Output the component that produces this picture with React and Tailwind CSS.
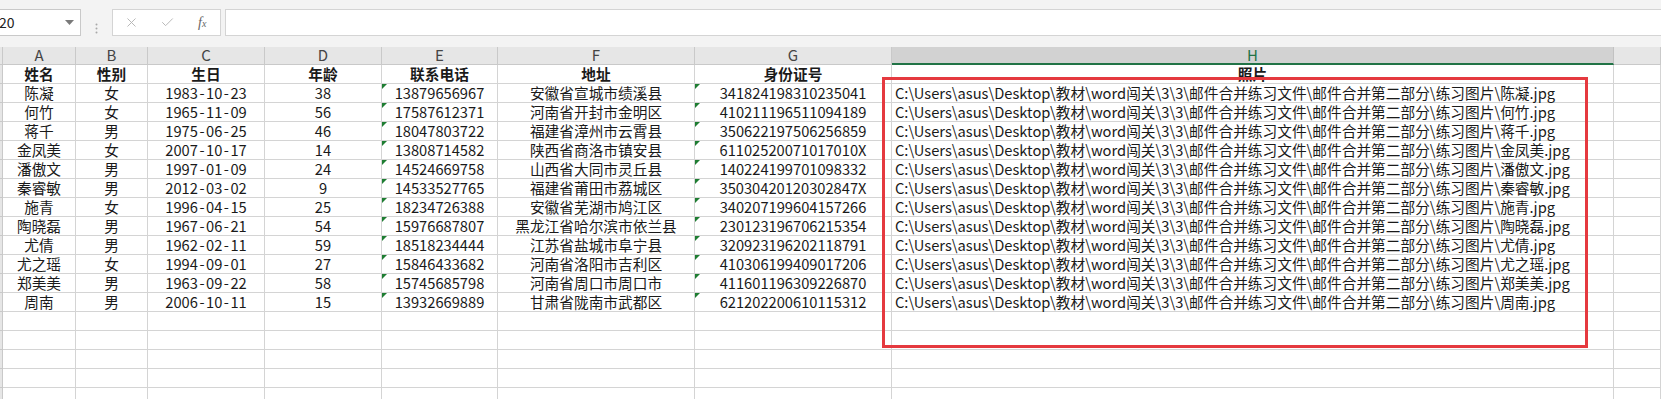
import React from 'react';
import { X, Check } from 'lucide-react';

const rows = [
  ['陈凝', '女', '1983-10-23', '38', '13879656967', '安徽省宣城市绩溪县', '341824198310235041'],
  ['何竹', '女', '1965-11-09', '56', '17587612371', '河南省开封市金明区', '410211196511094189'],
  ['蒋千', '男', '1975-06-25', '46', '18047803722', '福建省漳州市云霄县', '350622197506256859'],
  ['金凤美', '女', '2007-10-17', '14', '13808714582', '陕西省商洛市镇安县', '61102520071017010X'],
  ['潘傲文', '男', '1997-01-09', '24', '14524669758', '山西省大同市灵丘县', '140224199701098332'],
  ['秦睿敏', '男', '2012-03-02', '9', '14533527765', '福建省莆田市荔城区', '35030420120302847X'],
  ['施青', '女', '1996-04-15', '25', '18234726388', '安徽省芜湖市鸠江区', '340207199604157266'],
  ['陶晓磊', '男', '1967-06-21', '54', '15976687807', '黑龙江省哈尔滨市依兰县', '230123196706215354'],
  ['尤倩', '男', '1962-02-11', '59', '18518234444', '江苏省盐城市阜宁县', '320923196202118791'],
  ['尤之瑶', '女', '1994-09-01', '27', '15846433682', '河南省洛阳市吉利区', '410306199409017206'],
  ['郑美美', '男', '1963-09-22', '58', '15745685798', '河南省周口市周口市', '411601196309226870'],
  ['周南', '男', '2006-10-11', '15', '13932669889', '甘肃省陇南市武都区', '621202200610115312'],
];

const pathPrefix = 'C:\\Users\\asus\\Desktop\\教材\\word闯关\\3\\3\\邮件合并练习文件\\邮件合并第二部分\\练习图片\\';

const grid = 'grid grid-cols-[3px_73px_72px_117px_117px_116px_197px_197px_722px_47px]';
const cell = 'relative h-[19px] border-r border-b border-[#d4d4d4] flex items-center justify-center whitespace-nowrap overflow-visible';

// little green "number stored as text" marker
function Flag() {
  return <span className="absolute left-0 top-0 w-0 h-0 border-t-[5px] border-t-[#1e7d32] border-r-[5px] border-r-transparent" />;
}

// dates: hyphens are a bit wider in the sheet font
function DateText({ value }) {
  const parts = value.split('-');
  return (
    <span>
      {parts.map((p, i) => (
        <React.Fragment key={i}>
          {i > 0 && <span className="px-[1.5px]">-</span>}
          {p}
        </React.Fragment>
      ))}
    </span>
  );
}

function Toolbar() {
  return (
    <div className="h-[47px] bg-[#f3f3f3] pt-[9px] flex">
      <div className="w-[81px] h-[27px] bg-white border border-l-0 border-[#c9c9c9] flex items-center justify-between pr-[6px]">
        <span className="text-[14px] text-[#222] -ml-[1px]">20</span>
        <svg width="9" height="6" viewBox="0 0 9 6"><path d="M0 0h9L4.5 5z" fill="#7a7a7a" /></svg>
      </div>
      <div className="w-[31px] flex items-center justify-center">
        <svg width="3" height="11" viewBox="0 0 3 11">
          <circle cx="1.5" cy="1.5" r="1" fill="#a8a8a8" />
          <circle cx="1.5" cy="5.5" r="1" fill="#a8a8a8" />
          <circle cx="1.5" cy="9.5" r="1" fill="#a8a8a8" />
        </svg>
      </div>
      <div className="w-[109px] h-[27px] bg-white border border-[#d4d4d4] flex items-center">
        <div className="w-[38px] flex justify-center"><X size={15} strokeWidth={1.5} color="#b4b4b4" /></div>
        <div className="w-[34px] flex justify-center"><Check size={15} strokeWidth={1.5} color="#b4b4b4" /></div>
        <div className="w-[36px] flex justify-center text-[#666] italic font-['Liberation_Serif',serif] text-[14px]">
          f<span className="text-[10px] mt-[4px]">x</span>
        </div>
      </div>
      <div className="ml-[4px] flex-1 h-[27px] bg-white border border-r-0 border-[#d4d4d4]" />
    </div>
  );
}

function ColumnHeader() {
  const letters = ['', 'A', 'B', 'C', 'D', 'E', 'F', 'G', 'H', ''];
  return (
    <div className={grid}>
      {letters.map((l, i) => (
        <div
          key={i}
          className={
            i === 8
              ? 'h-[18px] bg-[#d2d2d2] border-r border-[#c2c2c2] border-b-2 border-b-[#217346] flex items-center justify-center text-[15px] text-[#217346]'
              : 'h-[18px] bg-[#e6e6e6] border-r border-b border-[#c9c9c9] flex items-center justify-center text-[15px] text-[#444]'
          }
        >
          {l}
        </div>
      ))}
    </div>
  );
}

export default function App() {
  const heads = ['姓名', '性别', '生日', '年龄', '联系电话', '地址', '身份证号', '照片'];
  return (
    <div className="relative w-[1661px] h-[399px] overflow-hidden bg-white font-['Noto_Sans_CJK_SC',sans-serif] text-[#1a1a1a]">
      <Toolbar />
      <ColumnHeader />

      {/* header row */}
      <div className={grid}>
        <div className="h-[19px] bg-[#e6e6e6] border-r border-b border-[#c9c9c9]" />
        {heads.map((h) => (
          <div key={h} className={cell + ' font-bold text-[14.7px]'}>{h}</div>
        ))}
        <div className={cell} />
      </div>

      {rows.map((r) => (
        <div key={r[0]} className={grid}>
          <div className="h-[19px] bg-[#e6e6e6] border-r border-b border-[#c9c9c9]" />
          {r.map((v, i) => (
            <div key={i} className={cell + ' text-[14.7px]'}>
              {(i === 4 || i === 6) && <Flag />}
              {i === 2 ? <DateText value={v} /> : v}
            </div>
          ))}
          <div className={cell + ' !justify-start pl-[3px] text-[14.7px]'}>{pathPrefix + r[0] + '.jpg'}</div>
          <div className={cell} />
        </div>
      ))}

      {[0, 1, 2, 3, 4].map((k) => (
        <div key={k} className={grid}>
          <div className="h-[19px] bg-[#e6e6e6] border-r border-b border-[#c9c9c9]" />
          {[0, 1, 2, 3, 4, 5, 6, 7, 8].map((i) => (
            <div key={i} className={cell} />
          ))}
        </div>
      ))}

      {/* red annotation box */}
      <div className="absolute left-[882px] top-[77px] w-[706px] h-[271px] border-[3px] border-[#e5393f] pointer-events-none" />
    </div>
  );
}
